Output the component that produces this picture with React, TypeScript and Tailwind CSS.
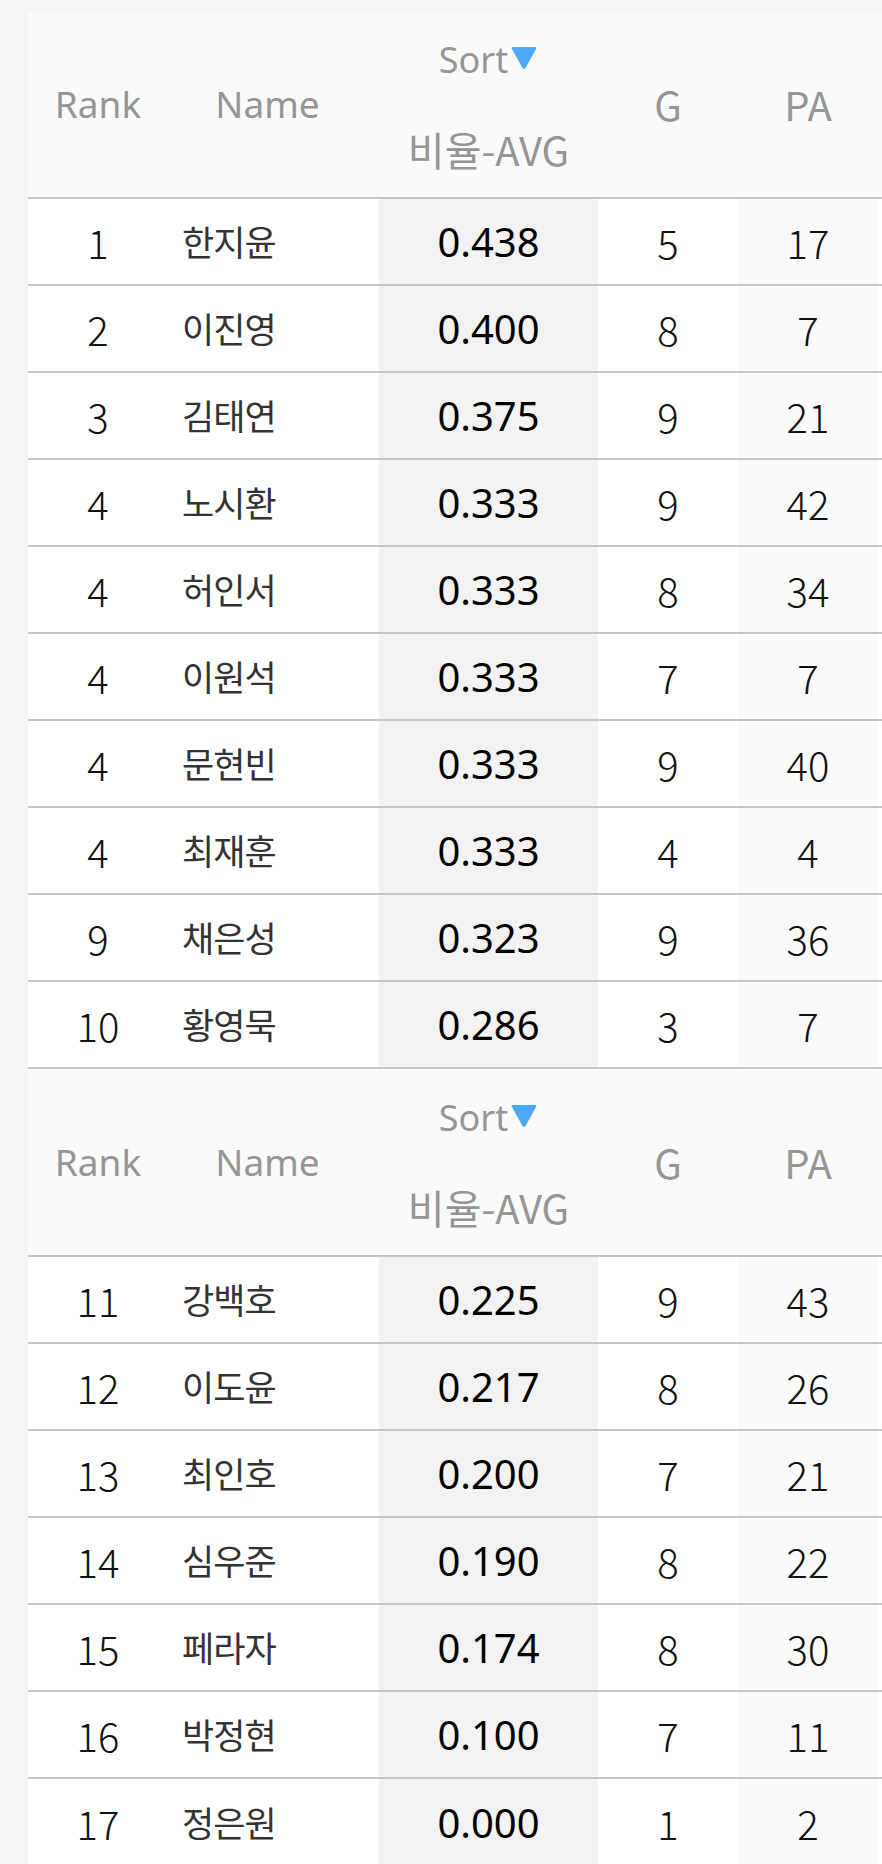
import React from "react";

type Row = { rank: number; name: string; avg: string; g: number; pa: number };

const top: Row[] = [
  { rank: 1, name: "한지윤", avg: "0.438", g: 5, pa: 17 },
  { rank: 2, name: "이진영", avg: "0.400", g: 8, pa: 7 },
  { rank: 3, name: "김태연", avg: "0.375", g: 9, pa: 21 },
  { rank: 4, name: "노시환", avg: "0.333", g: 9, pa: 42 },
  { rank: 4, name: "허인서", avg: "0.333", g: 8, pa: 34 },
  { rank: 4, name: "이원석", avg: "0.333", g: 7, pa: 7 },
  { rank: 4, name: "문현빈", avg: "0.333", g: 9, pa: 40 },
  { rank: 4, name: "최재훈", avg: "0.333", g: 4, pa: 4 },
  { rank: 9, name: "채은성", avg: "0.323", g: 9, pa: 36 },
  { rank: 10, name: "황영묵", avg: "0.286", g: 3, pa: 7 },
];

const bottom: Row[] = [
  { rank: 11, name: "강백호", avg: "0.225", g: 9, pa: 43 },
  { rank: 12, name: "이도윤", avg: "0.217", g: 8, pa: 26 },
  { rank: 13, name: "최인호", avg: "0.200", g: 7, pa: 21 },
  { rank: 14, name: "심우준", avg: "0.190", g: 8, pa: 22 },
  { rank: 15, name: "페라자", avg: "0.174", g: 8, pa: 30 },
  { rank: 16, name: "박정현", avg: "0.100", g: 7, pa: 11 },
  { rank: 17, name: "정은원", avg: "0.000", g: 1, pa: 2 },
];

function Header() {
  return (
    <div className="grid grid-cols-[140px_211px_219px_140px_140px_140px] h-[188px] bg-[#fafafa] border-b-2 border-[#c6c6c6] text-[#959595]">
      <div className="flex items-center justify-center text-[37px] font-['Noto_Sans','Noto_Sans_CJK_KR',sans-serif]">
        Rank
      </div>
      <div className="flex items-center justify-center pr-[12px] text-[37px] font-['Noto_Sans','Noto_Sans_CJK_KR',sans-serif]">
        Name
      </div>
      <div className="flex flex-col items-center justify-center">
        <div className="h-[89px] flex items-center">
          <span className="text-[36px] leading-none font-['Noto_Sans','Noto_Sans_CJK_KR',sans-serif]">
            Sort
          </span>
          <svg width="28" height="26" viewBox="0 0 28 26" className="ml-[2px] -mt-[4px]">
            <path
              d="M3 2 H25 Q27 2 26 4 L15.5 23 Q14 25 12.5 23 L2 4 Q1 2 3 2 Z"
              fill="#4ba9f7"
            />
          </svg>
        </div>
        <div className="h-[89px] flex items-center text-[40px] leading-none font-['Noto_Sans_CJK_KR','Noto_Sans',sans-serif]">
          비율-AVG
        </div>
      </div>
      <div className="flex items-center justify-center text-[40px] font-['Noto_Sans_CJK_KR','Noto_Sans',sans-serif]">
        G
      </div>
      <div className="flex items-center justify-center text-[40px] font-['Noto_Sans_CJK_KR','Noto_Sans',sans-serif]">
        PA
      </div>
      <div className="bg-[#fafafa]" />
    </div>
  );
}

function DataRow({ r, last }: { r: Row; last?: boolean }) {
  return (
    <div
      className={
        last
          ? "grid grid-cols-[140px_211px_219px_140px_140px_140px] h-[87px]"
          : "grid grid-cols-[140px_211px_219px_140px_140px_140px] h-[87px] border-b-2 border-[#c6c6c6]"
      }
    >
      <div className="flex items-center justify-center bg-white text-[40px] font-light text-[#111] font-['Noto_Sans_CJK_KR','Noto_Sans',sans-serif]">
        {r.rank}
      </div>
      <div className="flex items-center justify-start pl-[14px] bg-white text-[35px] tracking-[-1px] text-[#333] font-['Noto_Sans_CJK_KR','Noto_Sans',sans-serif]">
        {r.name}
      </div>
      <div className="flex items-center justify-center bg-[#f2f2f2] text-[40px] font-normal text-black font-['Noto_Sans','Noto_Sans_CJK_KR',sans-serif]">
        {r.avg}
      </div>
      <div className="flex items-center justify-center bg-white text-[40px] font-light text-[#111] font-['Noto_Sans_CJK_KR','Noto_Sans',sans-serif]">
        {r.g}
      </div>
      <div className="flex items-center justify-center bg-[#fafafa] text-[40px] font-light text-[#111] font-['Noto_Sans_CJK_KR','Noto_Sans',sans-serif]">
        {r.pa}
      </div>
      <div className="bg-white" />
    </div>
  );
}

export default function App() {
  return (
    <div className="h-[1864px] w-[882px] overflow-hidden bg-[#f4f5f7] pt-[11px] pl-[28px]">
      <div className="w-[990px] rounded-tl-[8px] overflow-hidden bg-white">
        <Header />
        {top.map((r, i) => (
          <DataRow key={"t" + i} r={r} />
        ))}
        <Header />
        {bottom.map((r, i) => (
          <DataRow key={"b" + i} r={r} last={i === bottom.length - 1} />
        ))}
      </div>
    </div>
  );
}
